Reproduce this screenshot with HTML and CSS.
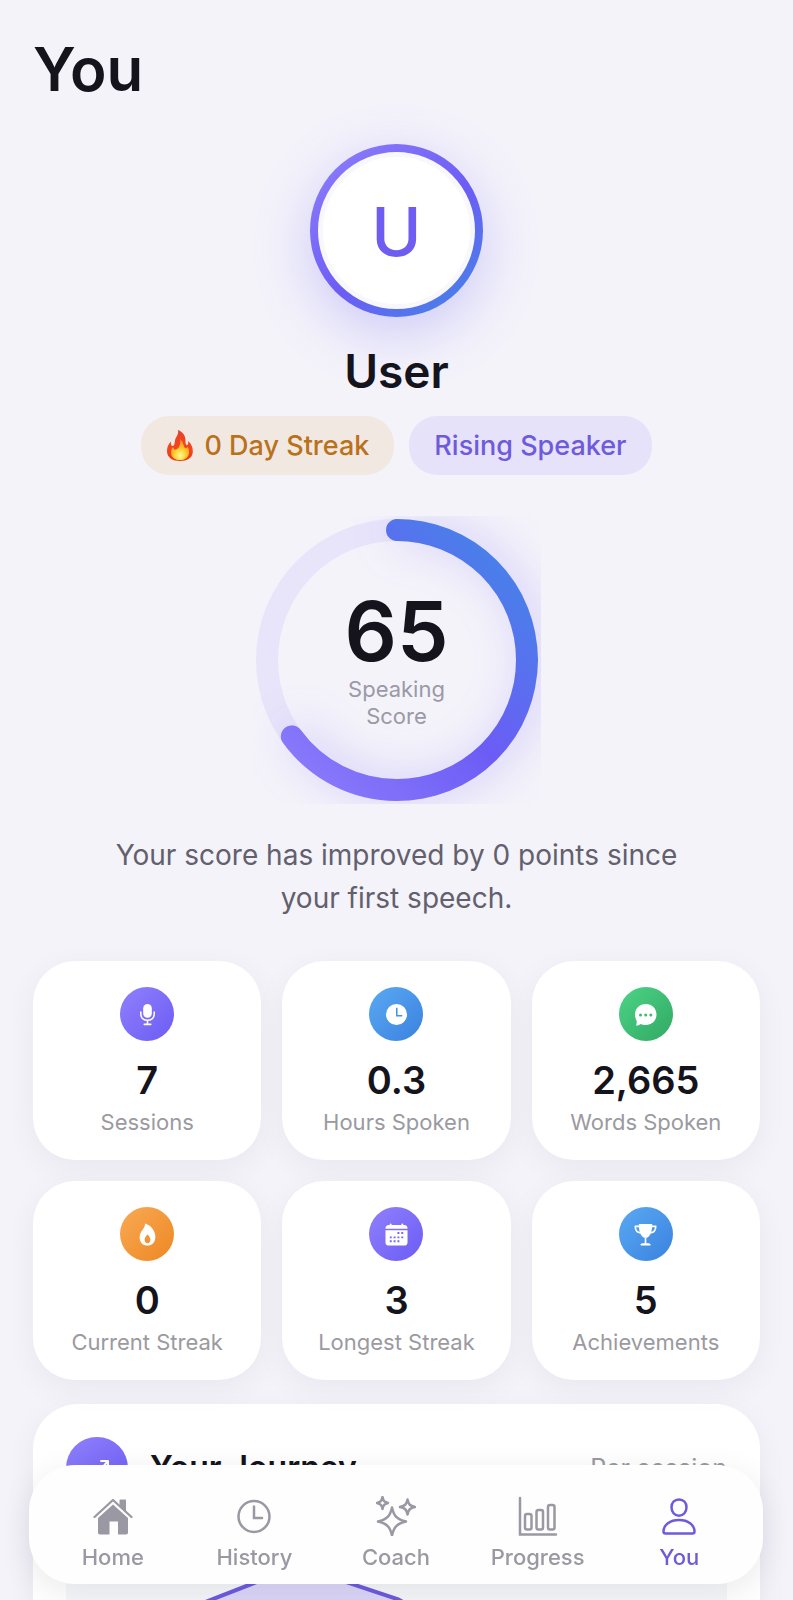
FILE: index.html
```html
<!DOCTYPE html>
<html lang="en">
  <head>
    <meta charset="UTF-8" />
    <meta name="viewport" content="width=device-width, initial-scale=1.0" />
    <title>You</title>
    <link rel="stylesheet" href="styles.css">
  </head>
  <body>
    <main class="screen">
      <h1>You</h1>

      <section class="profile">
        <div class="avatar">
          <div class="avatar-inner">U</div>
        </div>
        <h2>User</h2>
        <div class="badges">
          <span class="badge badge-streak">
            <svg class="flame" viewBox="0 0 28 32" aria-hidden="true">
              <defs>
                <linearGradient id="flameOuter" x1="0" y1="0" x2="0" y2="1">
                  <stop offset="0" stop-color="#e8402a" />
                  <stop offset="0.6" stop-color="#f4461c" />
                  <stop offset="1" stop-color="#e83a1c" />
                </linearGradient>
                <radialGradient id="flameInner" cx="0.5" cy="0.78" r="0.7">
                  <stop offset="0" stop-color="#fff7a0" />
                  <stop offset="0.4" stop-color="#ffd735" />
                  <stop offset="1" stop-color="#fb8a1c" />
                </radialGradient>
              </defs>
              <path fill="url(#flameOuter)" d="M12 0c5 2 8 6 7.500 12 0 2 .5 3 1.500 3s1.500-1.500 1-4c3.500 3 5 6.500 4.800 11C26.500 28 21 31 14 31S1.200 28 1 21.500C.8 17 2.500 14 5 11.500c-.4 2.500.2 4.500 1.500 4.500 2 0 2-2.500 2.500-5.500C9.500 7 13 5 12 0z" />
              <path fill="url(#flameInner)" d="M14 9c4 3 3 7 5 9 1 .8 2 0 2.200-1.500C23 19 23.500 21 22.800 24c-1 4-4.500 6-8.800 6s-8-2-8.800-6c-.5-3 .3-5 1.800-7 .5 2 1.500 3 3 2.500 3-1 5-5 4-10.500z" />
            </svg>
            0 Day Streak
          </span>
          <span class="badge badge-rank">Rising Speaker</span>
        </div>
      </section>

      <section class="score">
        <div class="ring">
          <svg viewBox="0 0 288 288" aria-hidden="true">
            <defs>
              <linearGradient id="ringGradient" x1="0" y1="0" x2="1" y2="1">
                <stop offset="0" stop-color="#9080fc" />
                <stop offset="0.5" stop-color="#6c5cf5" />
                <stop offset="1" stop-color="#3f8ae6" />
              </linearGradient>
            </defs>
            <circle class="ring-track" cx="144" cy="144" r="130" />
            <circle class="ring-value" cx="144" cy="144" r="130" pathLength="100" stroke-dasharray="65 100" />
          </svg>
          <div class="ring-text">
            <strong>65</strong>
            <span>Speaking<br />Score</span>
          </div>
        </div>
        <p>Your score has improved by 0 points since your first speech.</p>
      </section>

      <section class="stats">
        <div class="stat">
          <span class="stat-icon purple">
            <svg viewBox="0 0 24 24" aria-hidden="true">
              <rect x="7.500" y="1" width="9" height="14.500" rx="4.500" fill="#fff" />
              <path d="M5 9.500v2c0 4 3 6.500 7 6.500s7-2.500 7-6.500v-2M12 18v4M8.500 22.300h7" fill="none" stroke="#fff" stroke-width="1.600" stroke-linecap="round" />
            </svg>
          </span>
          <strong>7</strong>
          <span class="stat-label">Sessions</span>
        </div>
        <div class="stat">
          <span class="stat-icon blue">
            <svg viewBox="0 0 24 24" aria-hidden="true">
              <circle cx="12" cy="12" r="11" fill="#fff" />
              <path d="M12.300 5v8.200H18" fill="none" stroke="#4391ea" stroke-width="1.600" />
            </svg>
          </span>
          <strong>0.3</strong>
          <span class="stat-label">Hours Spoken</span>
        </div>
        <div class="stat">
          <span class="stat-icon green">
            <svg viewBox="0 0 24 24" aria-hidden="true">
              <path d="M12.300 1C18.700 1 23.500 5.800 23.500 12s-4.800 11-11.200 11c-2 0-3.800-.5-5.200-1.200-1.300.9-3 1.700-5 1.700.6-1.200.9-3.300.6-5C1.700 16.500 1 14.400 1 12 1 5.800 5.800 1 12.300 1z" fill="#fff" />
              <g fill="#3cbd73">
                <circle cx="6.800" cy="12.500" r="1.600" />
                <circle cx="12.200" cy="12.500" r="1.600" />
                <circle cx="17.600" cy="12.500" r="1.600" />
              </g>
            </svg>
          </span>
          <strong>2,665</strong>
          <span class="stat-label">Words Spoken</span>
        </div>
        <div class="stat">
          <span class="stat-icon orange">
            <svg viewBox="0 0 24 24" aria-hidden="true">
              <path d="M9.500.5c6.500 2 10.700 8 10.700 14 0 5.500-3.400 9-8.200 9s-8.200-3.300-8.200-8.500c0-3.500 1.500-6 3.300-8.300C8.600 4.800 9.300 3 9.500.5z" fill="#fff" />
              <path d="M12 12c2 2 3 3.500 3 5.500 0 2.200-1.200 3.500-3 3.500s-3-1.300-3-3.500c0-2 1-3.500 3-5.500z" fill="#f29434" />
            </svg>
          </span>
          <strong>0</strong>
          <span class="stat-label">Current Streak</span>
        </div>
        <div class="stat">
          <span class="stat-icon purple">
            <svg viewBox="0 0 24 24" aria-hidden="true">
              <path d="M.5 5.500C.5 3.400 1.700 2 4 2h1V1c0-.7 1.800-.7 1.800 0v1h10.400V1c0-.7 1.800-.7 1.800 0v1h1c2.300 0 3.500 1.400 3.500 3.500V6H.5zM.5 7.500h23V20c0 2.300-1.200 3.500-3.500 3.500H4C1.700 23.500.5 22.300.5 20z" fill="#fff" />
              <g fill="#7666f8">
                <path d="M13 9.500h2v2h-2zM17 9.500h2v2h-2zM5 14h2v2H5zM9 14h2v2H9zM13 14h2v2h-2zM17 14h2v2h-2zM5 18h2v2H5zM9 18h2v2H9zM13 18h2v2h-2z" />
              </g>
            </svg>
          </span>
          <strong>3</strong>
          <span class="stat-label">Longest Streak</span>
        </div>
        <div class="stat">
          <span class="stat-icon blue">
            <svg viewBox="0 0 24 24" aria-hidden="true">
              <path d="M5 1h14c0 8.500-2 12.500-5.500 14.500h-3C7 13.500 5 9.500 5 1z" fill="#fff" />
              <path d="M5.500 3.500H1.300c0 4 1.700 6.500 5.700 7M18.500 3.500h4.200c0 4-1.700 6.500-5.700 7M12 15v7M7.500 22.500c1-1 8-1 9 0z" fill="none" stroke="#fff" stroke-width="1.700" stroke-linejoin="round" />
            </svg>
          </span>
          <strong>5</strong>
          <span class="stat-label">Achievements</span>
        </div>
      </section>

      <section class="journey">
        <header>
          <span class="journey-icon purple">
            <svg viewBox="0 0 30 30" aria-hidden="true">
              <path d="M3 23l8-8 5 5L25 9M19 8h7v7" fill="none" stroke="#fff" stroke-width="2" stroke-linecap="round" stroke-linejoin="round" />
            </svg>
          </span>
          <h3>Your Journey</h3>
          <span class="journey-unit">Per session</span>
        </header>
        <svg class="chart" viewBox="0 0 660 220" aria-hidden="true">
          <path class="chart-area" d="M0 150L144 93 190 75 280 75 331 92 440 150 660 130V220H0z" />
          <path class="chart-line" d="M0 150L144 93 190 75 280 75 331 92 440 150 660 130" />
        </svg>
      </section>
    </main>

    <nav class="tabs">
      <a href="#home">
        <svg viewBox="0 0 40 40" aria-hidden="true">
          <path d="M20 8.500L35 22v14.500c0 1.300-.7 2-2 2h-8V25.500h-8.500v13H7c-1.300 0-2-.7-2-2V22z" fill="currentColor" />
          <path d="M26.500 4.500c0-.8.400-1 1-1h4.500c.7 0 1 .3 1 1V16l-6.500-5.500z" fill="currentColor" />
          <path d="M1.500 21L20 4l18.500 17" fill="none" stroke="currentColor" stroke-width="2.300" stroke-linecap="round" stroke-linejoin="round" />
        </svg>
        Home
      </a>
      <a href="#history">
        <svg viewBox="0 0 40 40" aria-hidden="true">
          <g fill="none" stroke="currentColor" stroke-width="2.500" stroke-linecap="round">
            <circle cx="20" cy="20.500" r="15.500" />
            <path d="M20 10.500v11.500h8" />
          </g>
        </svg>
        History
      </a>
      <a href="#coach">
        <svg viewBox="0 0 40 40" aria-hidden="true">
          <g fill="none" stroke="currentColor" stroke-width="2.500" stroke-linejoin="round">
            <path d="M16 11.500c1.800 8.500 5 12 14 14-9 2-12.200 5.500-14 14-1.800-8.500-5-12-14-14 9-2 12.200-5.500 14-14z" />
            <path d="M6.500 1c.8 4 1.800 5 5.500 6-3.700 1-4.700 2-5.500 6-.8-4-1.800-5-5.500-6 3.700-1 4.700-2 5.500-6z" />
            <path d="M31.500 3.500c1 5 2.500 6.500 7.500 7.500-5 1-6.500 2.500-7.500 7.500-1-5-2.500-6.500-7.500-7.500 5-1 6.500-2.500 7.500-7.500z" />
          </g>
        </svg>
        Coach
      </a>
      <a href="#progress">
        <svg viewBox="0 0 40 40" aria-hidden="true">
          <g fill="none" stroke="currentColor" stroke-width="2.500" stroke-linecap="round">
            <path d="M2 2v36.500h36" />
            <rect x="7" y="18" width="6.500" height="15.500" rx="2" />
            <rect x="18.500" y="14" width="6.500" height="19.500" rx="2" />
            <rect x="30" y="9" width="6.500" height="24.500" rx="2" />
          </g>
        </svg>
        Progress
      </a>
      <a href="#you" class="active">
        <svg viewBox="0 0 40 40" aria-hidden="true">
          <g fill="none" stroke="currentColor" stroke-width="2.500">
            <path d="M20 3.500c4.500 0 7.500 3.300 7.500 7.800s-3 8.400-7.500 8.400-7.500-3.900-7.500-8.400 3-7.800 7.500-7.800z" />
            <path d="M20 24c9 0 15.500 4.800 15.500 11.500 0 1.200-.7 2-2 2h-27c-1.300 0-2-.8-2-2C4.500 28.800 11 24 20 24z" />
          </g>
        </svg>
        You
      </a>
    </nav>
  </body>
</html>
```

FILE: styles.css
```css
* {
  box-sizing: border-box;
}
body {
  margin: 0;
  font-family: Inter, "Liberation Sans", sans-serif;
  background: #f4f3fa;
  color: #15141c;
  height: 100vh;
  overflow: hidden;
}

.screen {
  height: 100%;
  padding: 32px 33px 0;
  overflow-y: auto;
  scrollbar-width: none;
}

h1,
h2,
h3,
p {
  margin: 0;
  font-weight: 600;
}
h1 {
  font-size: 60px;
  line-height: 74px;
}

/* Profile */
.profile {
  display: flex;
  flex-direction: column;
  align-items: center;
  margin-top: 38px;
}
.avatar {
  width: 173px;
  height: 173px;
  padding: 8px;
  border-radius: 50%;
  background: linear-gradient(140deg, #9080fc, #6c5cf5 55%, #3f8ae6);
  box-shadow: 0 16px 56px rgba(108, 92, 245, 0.28);
}
.avatar-inner {
  display: flex;
  align-items: center;
  justify-content: center;
  height: 100%;
  border: 5px solid #f8f8fb;
  border-radius: 50%;
  background: #fff;
  color: #6f5cf1;
  font-size: 68px;
  font-weight: 500;
  line-height: 80px;
}
h2 {
  margin-top: 24px;
  font-size: 46px;
  line-height: 60px;
}
.badges {
  display: flex;
  gap: 15px;
  margin-top: 15px;
}
.badge {
  display: flex;
  align-items: center;
  gap: 10px;
  height: 59px;
  padding: 0 25px;
  border-radius: 28px;
  font-size: 27px;
  font-weight: 500;
}
.badge-streak {
  background: #f2e8e2;
  color: #b9711b;
}
.badge-rank {
  background: #e6e2f9;
  color: #6e5bdc;
}
.flame {
  width: 28px;
  height: 32px;
}

/* Speaking score */
.score {
  display: flex;
  flex-direction: column;
  align-items: center;
  margin-top: 41px;
}
.ring {
  display: grid;
  place-items: center;
  width: 288px;
  height: 288px;
}
.ring > * {
  grid-area: 1 / 1;
}
.ring svg {
  width: 288px;
  height: 288px;
  overflow: hidden;
  transform: rotate(-90deg);
}
.ring circle {
  fill: none;
  stroke-width: 22px;
}
.ring-track {
  stroke: #e8e4fa;
}
.ring .ring-value {
  stroke: url(#ringGradient);
  stroke-linecap: round;
  filter: drop-shadow(0 8px 22px rgba(108, 92, 245, 0.3));
}
.ring-text {
  position: relative;
  text-align: center;
  color: #9a99a6;
  font-size: 22px;
  line-height: 27px;
}
.ring-text strong {
  display: block;
  margin-bottom: 2px;
  color: #15141c;
  font-size: 82px;
  font-weight: 600;
  line-height: 84px;
}
.score p {
  max-width: 600px;
  margin-top: 30px;
  color: #62606d;
  font-size: 28px;
  font-weight: 400;
  line-height: 43px;
  text-align: center;
}

/* Stat cards */
.stats {
  display: grid;
  grid-template-columns: repeat(3, 1fr);
  gap: 21px;
  margin-top: 41px;
}
.stat {
  display: flex;
  flex-direction: column;
  align-items: center;
  height: 199px;
  padding-top: 26px;
  border-radius: 42px;
  background: #fff;
  box-shadow: 0 8px 32px rgba(20, 18, 40, 0.05);
}
.stat-icon {
  display: grid;
  place-items: center;
  width: 54px;
  height: 54px;
  border-radius: 50%;
}
.stat-icon svg {
  width: 23px;
  height: 23px;
}
.purple {
  background: linear-gradient(135deg, #9080fc, #6c5cf5);
}
.blue {
  background: linear-gradient(135deg, #5aa9f2, #3a82e0);
}
.green {
  background: linear-gradient(135deg, #4cd486, #32a864);
}
.orange {
  background: linear-gradient(135deg, #f8aa55, #ee8722);
}
.stat strong {
  margin-top: 16px;
  font-size: 38px;
  font-weight: 600;
  line-height: 46px;
}
.stat-label {
  margin-top: 6px;
  color: #9a9aa0;
  font-size: 22px;
  line-height: 26px;
}

/* Journey */
.journey {
  margin-top: 24px;
  padding: 33px 33px 120px;
  border-radius: 45px;
  background: #fff;
  box-shadow: 0 8px 32px rgba(20, 18, 40, 0.05);
}
.journey header {
  display: flex;
  align-items: center;
  gap: 22px;
}
.journey-icon {
  display: grid;
  place-items: center;
  width: 62px;
  height: 62px;
  border-radius: 50%;
}
.journey-icon svg {
  width: 30px;
  height: 30px;
}
.journey h3 {
  flex: 1;
  font-size: 32px;
  line-height: 40px;
}
.journey-unit {
  color: #9a9aa0;
  font-size: 25px;
  line-height: 30px;
}
.chart {
  display: block;
  width: 100%;
  margin-top: 8px;
  background: #f6f7fa;
}
.chart-area {
  fill: #dcd6f8;
}
.chart-line {
  fill: none;
  stroke: #6c5bdf;
  stroke-width: 4px;
  stroke-linejoin: round;
}

/* Bottom tab bar */
.tabs {
  position: fixed;
  right: 30px;
  bottom: 16px;
  left: 29px;
  display: grid;
  grid-template-columns: repeat(5, 1fr);
  height: 119px;
  padding: 31px 13px 0;
  border-radius: 46px;
  background: #fefefe;
  box-shadow: 0 8px 32px rgba(20, 18, 40, 0.09);
}
.tabs a {
  display: flex;
  flex-direction: column;
  align-items: center;
  gap: 7px;
  color: #9a99a3;
  font-size: 22px;
  font-weight: 500;
  line-height: 28px;
  text-decoration: none;
}
.tabs svg {
  width: 40px;
  height: 40px;
}
.tabs .active {
  color: #6e5bdc;
}
```
